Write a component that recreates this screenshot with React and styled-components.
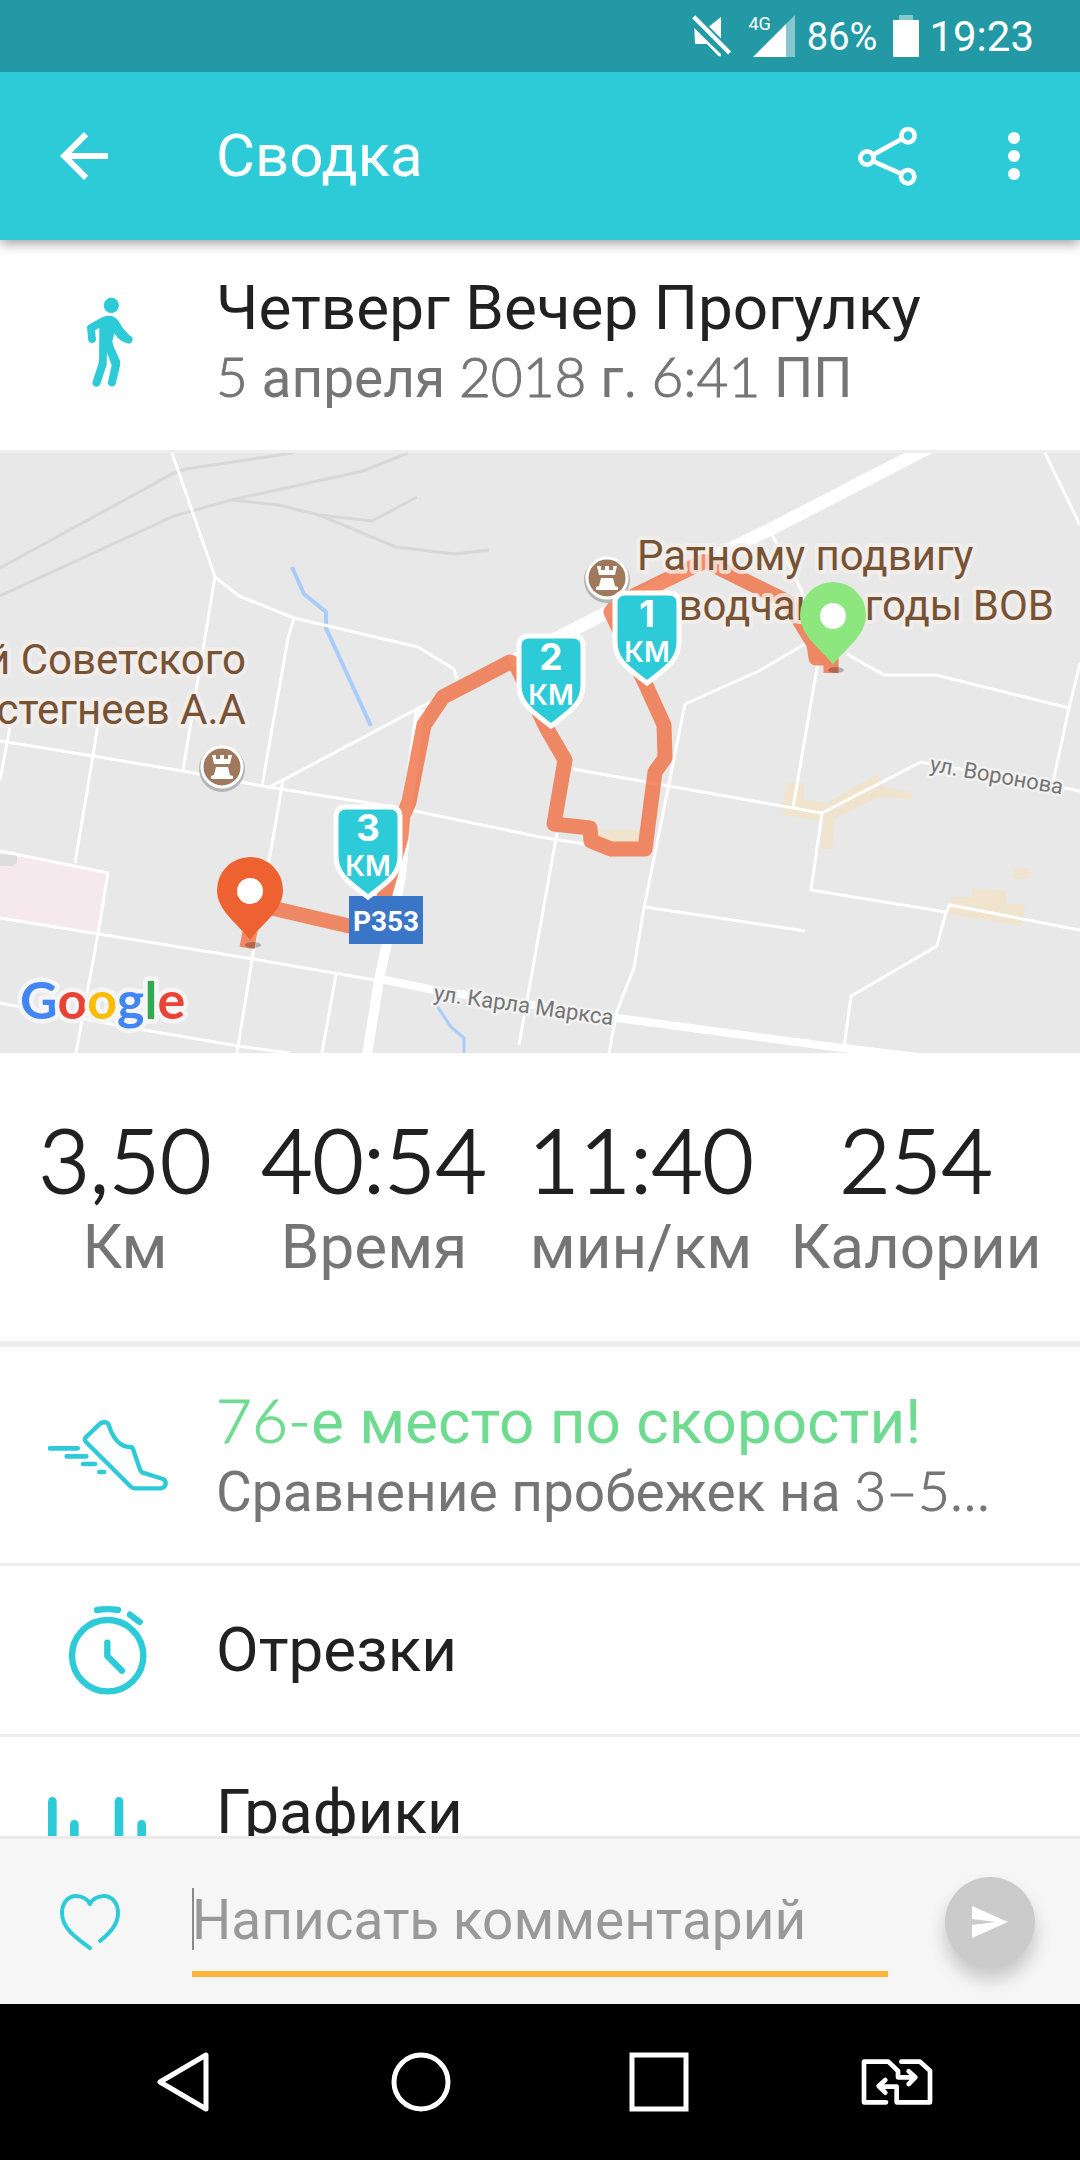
import styled, { createGlobalStyle } from "styled-components";

const teal = "#2dcad7";

const GlobalStyle = createGlobalStyle`
  * {
    box-sizing: border-box;
  }

  body {
    margin: 0;
    background: #ffffff;
    font-family: Roboto, "Noto Sans", sans-serif;
  }

  button {
    background: none;
    border: none;
    padding: 0;
    margin: 0;
    font-family: inherit;
    color: inherit;
    cursor: pointer;
  }

  svg {
    display: block;
    flex: none;
  }
`;

const Page = styled.div`
  display: flex;
  flex-direction: column;
  height: 100vh;
  overflow: hidden;
`;

const StatusBar = styled.div`
  flex: none;
  display: flex;
  align-items: center;
  justify-content: flex-end;
  height: 72px;
  padding-right: 46px;
  background: #2499a6;
  color: #ffffff;
`;

const StatusText = styled.span`
  font-size: ${(props) => (props.$large ? "42px" : "38px")};
  line-height: 48px;
  padding-top: 2px;
  margin-left: ${(props) => (props.$large ? "10px" : "12px")};
`;

const Signal = styled.div`
  display: flex;
  align-items: flex-start;
  margin-left: 16px;
  height: 42px;

  span {
    font-size: 18px;
    line-height: 18px;
    margin-right: -18px;
  }
`;

const Battery = styled.div`
  margin-left: 16px;
`;

const AppBar = styled.header`
  flex: none;
  display: flex;
  align-items: center;
  height: 168px;
  padding: 0 30px 0 48px;
  background: ${teal};
  color: #ffffff;
  box-shadow: 0 3px 12px rgba(0, 0, 0, 0.4);
  clip-path: inset(0 0 -20px 0);
  z-index: 1;
`;

const AppTitle = styled.h1`
  flex: 1;
  margin: 0 0 0 96px;
  font-size: 60px;
  font-weight: 400;
  line-height: 72px;
`;

const BarButton = styled.button`
  margin-left: 60px;
`;

const Scroll = styled.main`
  flex: 1;
  min-height: 0;
  overflow: hidden;
`;

const IconCell = styled.div`
  flex: none;
  display: flex;
  justify-content: center;
  width: 216px;
`;

const Copy = styled.div`
  flex: 1;
  min-width: 0;
  text-align: left;
`;

const Summary = styled.section`
  display: flex;
  align-items: center;
  height: 213px;
  border-bottom: 3px solid #eeeeee;

  ${Copy} {
    padding-bottom: 4px;
  }
`;

const Title = styled.h2`
  margin: 0;
  font-size: 62px;
  font-weight: 400;
  line-height: 70px;
  white-space: nowrap;
  color: ${(props) => (props.$highlight ? "#6edb90" : "#212121")};
`;

const Subtitle = styled.p`
  margin: 0;
  font-size: 55px;
  line-height: 70px;
  white-space: nowrap;
  color: #757575;
`;

const Digits = styled.span`
  font-family: Lato, Roboto, sans-serif;
  font-weight: 300;
  line-height: 1;
  -webkit-text-stroke: 1px currentColor;
`;

const MapWrapper = styled.section`
  height: 600px;
  overflow: hidden;
  background: #e8e8e8;

  svg {
    width: 100%;
    height: 600px;
  }
`;

const Stats = styled.section`
  display: grid;
  grid-template-columns: 250fr 248fr 286fr 264fr;
  padding: 56px 32px 56px 0;
  border-bottom: 6px solid #eeeeee;
`;

const Stat = styled.div`
  text-align: center;
`;

const StatValue = styled.div`
  font-family: Lato, Roboto, sans-serif;
  font-size: 88px;
  font-weight: 300;
  line-height: 100px;
  color: #212121;
  -webkit-text-stroke: 2px currentColor;
`;

const StatLabel = styled.div`
  font-size: 62px;
  line-height: 76px;
  color: #757575;
`;

const Row = styled.button`
  display: flex;
  align-items: center;
  width: 100%;
  height: ${(props) => (props.$tall ? "219px" : "171px")};
  border-bottom: 3px solid #eeeeee;

  ${Copy} {
    padding-top: ${(props) => (props.$tall ? "4px" : "0")};
  }
`;

const CommentBar = styled.form`
  flex: none;
  display: flex;
  align-items: center;
  height: 168px;
  padding: 0 45px 0 54px;
  background: #f6f6f6;
  border-top: 3px solid #ebebeb;
`;

const Field = styled.div`
  flex: 1;
  min-width: 0;
  display: flex;
  align-items: center;
  height: 110px;
  margin: 0 57px 0 66px;
  border-bottom: 6px solid #fdb638;
`;

const Caret = styled.span`
  width: 2px;
  height: 62px;
  margin-right: -2px;
  background: #8a8a8a;
`;

const CommentInput = styled.input`
  flex: 1;
  min-width: 0;
  padding: 2px 0 0;
  border: none;
  outline: none;
  background: none;
  font-family: inherit;
  font-size: 55px;
  line-height: 64px;
  color: #212121;

  &::placeholder {
    color: #999999;
    opacity: 1;
  }
`;

const SendButton = styled.button`
  display: flex;
  align-items: center;
  justify-content: center;
  width: 90px;
  height: 90px;
  border-radius: 50%;
  background: #cbcbcb;
  box-shadow: 0 12px 18px rgba(0, 0, 0, 0.2);
`;

const NavBar = styled.nav`
  flex: none;
  display: grid;
  grid-template-columns: repeat(4, 1fr);
  height: 156px;
  padding: 0 64px;
  background: #000000;

  button {
    display: flex;
    align-items: center;
    justify-content: center;
  }
`;

const stats = [
  { value: "3,50", label: "Км" },
  { value: "40:54", label: "Время" },
  { value: "11:40", label: "мин/км" },
  { value: "254", label: "Калории" },
];

const roads = [
  "M172 0 L215 124 L239 143 L294 165 L418 194 L454 216 L457 226",
  "M215 124 L183 317",
  "M294 165 L288 185 L262 333",
  "M269 334 L283 327 L432 248",
  "M0 288 L93 303 L183 318 L262 333 L400 355 L540 384 L585 391",
  "M10 274 L0 327",
  "M98 270 L93 303 L75 410",
  "M283 327 L253 501 L237 600",
  "M0 398 L108 420 L98 481 L76 600",
  "M0 465 L253 506 L375 527",
  "M336 521 L322 600",
  "M0 550 L138 576 L238 593 L290 600",
  "M557 380 L519 592",
  "M1045 0 L1080 72",
  "M771 80 L795 123 L805 147",
  "M805 191 L759 218 L685 251 L643 460 L634 515 L617 558 L609 600",
  "M847 201 L884 222 L936 222 L1069 255",
  "M1080 210 L1069 255 L1053 329",
  "M818 209 L793 355",
  "M573 316 L793 355 L822 360 L921 309 L1080 338",
  "M822 360 L811 437 L946 459 L950 452 L1080 477",
  "M946 459 L937 493 L851 543 L844 594",
  "M645 454 L805 478",
];

const rails = [
  "M0 115 L174 20 L186 16 L293 0",
  "M0 143 L174 63 L231 47 L363 18 L408 0",
  "M231 47 L279 52 L319 62 L372 68 L417 44",
  "M319 62 L396 94 L455 101 L489 97",
];

const Mixed = ({ children }) =>
  children
    .split(/([\d:–-]+…?)/)
    .map((part, index) =>
      index % 2 ? <Digits key={index}>{part}</Digits> : part
    );

const Rook = ({ x, y }) => (
  <g transform={`translate(${x} ${y})`}>
    <circle cy="2" r="23" fill="#b5b5b5" />
    <circle r="20" fill="#a0785b" stroke="#ffffff" strokeWidth="3" />
    <path
      d="M-10 -12 H-6 V-8 H-2 V-12 H2 V-8 H6 V-12 H10 L8 -3 H-8 Z M-6 0 H6 L8 8 L11 9 V12 H-11 V9 L-8 8 Z"
      fill="#ffffff"
    />
  </g>
);

const Pin = ({ x, y, color }) => (
  <g transform={`translate(${x} ${y})`}>
    <ellipse cx="3" cy="5" rx="8" ry="3" fill="#000000" opacity="0.25" />
    <path
      d="M0 0 C-9 -14 -33 -28 -33 -50 A33 33 0 0 1 33 -50 C33 -28 9 -14 0 0 Z"
      fill={color}
    />
    <circle cy="-49" r="13" fill="#ffffff" />
  </g>
);

const Shield = ({ x, y, number }) => (
  <g transform={`translate(${x} ${y})`}>
    <path
      d="M-22 2 H22 Q32 2 32 12 V51 C32 70 18 78 0 92 C-18 78 -32 70 -32 51 V12 Q-32 2 -22 2 Z"
      fill={teal}
      stroke="#ffffff"
      strokeWidth="5"
    />
    <text
      y="36"
      textAnchor="middle"
      fontFamily="Inter, sans-serif"
      fontSize="37"
      fontWeight="700"
      fill="#ffffff"
    >
      {number}
    </text>
    <text
      y="71"
      textAnchor="middle"
      fontFamily="Inter, sans-serif"
      fontSize="28"
      fontWeight="600"
      fill="#ffffff"
    >
      КМ
    </text>
  </g>
);

const RouteMap = () => (
  <MapWrapper>
    <svg
      viewBox="0 0 1080 600"
      preserveAspectRatio="xMidYMid slice"
      role="img"
      aria-label="Карта маршрута"
    >
      <rect width="1080" height="600" fill="#e8e8e8" />
      <path d="M17 402 L108 420 L98 480 L0 465 V413 H14 Z" fill="#f5e9ed" />
      <path d="M0 402 H17 V410 L12 413 H0 Z" fill="#dcdcdc" />
      <g fill="#f0e4cf">
        <path d="M787 330 H804 V346 L826 350 L876 322 L884 328 L882 334 L913 339 V346 L880 344 L835 366 L832 396 H821 L824 368 L782 362 V350 Z" />
        <path d="M952 444 H972 V435 L1006 438 V451 H1025 L1022 473 L948 461 Z" />
        <path d="M1014 415 H1029 V426 H1012 Z" />
        <path d="M598 377 H640 V389 H598 Z" />
      </g>
      <g fill="none" stroke="#d8d8d8" strokeWidth="3">
        {rails.map((d) => (
          <path key={d} d={d} />
        ))}
      </g>
      <g fill="none" stroke="#a9cdfb" strokeWidth="4">
        <path d="M292 114 L304 141 L326 159 V175 L371 273" />
        <path d="M437 553 L451 574 L464 585 V600" strokeWidth="3" />
      </g>
      <g fill="none" stroke="#ffffff" strokeWidth="3" strokeLinejoin="round">
        {roads.map((d) => (
          <path key={d} d={d} />
        ))}
        <path
          d="M930 -6 L771 76 L705 108 L604 161 L510 209"
          strokeWidth="13"
        />
        <path d="M420 256 L407 355 L401 424 L379 527 L367 602" strokeWidth="10" />
        <path d="M375 525 L434 537 L617 565 L826 593 L919 604" strokeWidth="8" />
      </g>
      <path
        d="M247 495 L255 451 L349 473 L375 478 L388 430 L401 384 L403 363 L409 349 L424 272 L443 244 L510 209 L516 212 L547 276 L565 307 L554 371 L590 375 L591 388 L611 396 H645 L655 319 L665 305 L664 272 L645 230 L611 159 L617 151 L705 108 L788 149 L814 191 L816 205 H831 V220"
        fill="none"
        stroke="#ef6b3e"
        strokeWidth="15"
        strokeLinejoin="round"
        opacity="0.78"
      />

      <rect x="349" y="443" width="74" height="48" fill="#3a76c8" />
      <text
        x="386"
        y="478"
        textAnchor="middle"
        fontFamily="Roboto, sans-serif"
        fontSize="28"
        fontWeight="700"
        fill="#ffffff"
      >
        P353
      </text>

      <g
        fontFamily="Roboto, sans-serif"
        fontSize="42"
        fill="#775334"
        stroke="#f3efec"
        strokeWidth="8"
        strokeOpacity="0.8"
        strokeLinejoin="round"
        paintOrder="stroke"
      >
        <text x="246" y="221" textAnchor="end">
          й Советского
        </text>
        <text x="246" y="271" textAnchor="end">
          стегнеев А.А
        </text>
        <text x="637" y="117">
          Ратному подвигу
        </text>
        <text x="1054" y="167" textAnchor="end">
          водчан в годы ВОВ
        </text>
      </g>
      <g
        fontFamily="Roboto, sans-serif"
        fontSize="22"
        fill="#757575"
        stroke="#f2f2f2"
        strokeWidth="5"
        strokeLinejoin="round"
        paintOrder="stroke"
      >
        <text transform="translate(433 547) rotate(8)">ул. Карла Маркса</text>
        <text transform="translate(929 318) rotate(10)">ул. Воронова</text>
      </g>

      <Rook x={222} y={314} />
      <Rook x={607} y={125} />
      <Pin x={250} y={487} color="#ee6130" />
      <Pin x={833} y={212} color="#8ee67e" />
      <Shield x={368} y={352} number="3" />
      <Shield x={551} y={181} number="2" />
      <Shield x={647} y={138} number="1" />

      <text
        x="20"
        y="566"
        fontFamily="Lato, sans-serif"
        fontSize="52"
        fontWeight="700"
        stroke="#f5f5f5"
        strokeWidth="9"
        strokeLinejoin="round"
        paintOrder="stroke"
      >
        <tspan fill="#4285f4">G</tspan>
        <tspan fill="#ea4335">o</tspan>
        <tspan fill="#fbbc05">o</tspan>
        <tspan fill="#4285f4">g</tspan>
        <tspan fill="#34a853">l</tspan>
        <tspan fill="#ea4335">e</tspan>
      </text>
    </svg>
  </MapWrapper>
);

const WalkIcon = () => (
  <svg width="120" height="130" viewBox="-6 30 360 390" fill={teal}>
    <circle cx="184" cy="106" r="23" />
    <path d="M172 137 C188 136 198 142 205 152 Q216 172 227 184 L240 197 A12 12 0 0 1 231 220 L214 212 Q201 205 193 190 L187 214 Q188 224 194 236 L210 272 Q212 282 209 292 L197 342 A12 12 0 0 1 174 336 L185 286 L171 248 L170 285 L151 342 A12 12 0 0 1 128 334 L147 276 L148 174 L135 181 L138 208 A12 12 0 0 1 115 212 L111 172 Q111 167 116 164 L152 144 Q163 138 172 137 Z" />
  </svg>
);

const ShoeIcon = () => (
  <svg
    width="120"
    height="72"
    viewBox="54 88 360 216"
    fill="none"
    stroke={teal}
    strokeWidth="13"
    strokeLinecap="round"
    strokeLinejoin="round"
  >
    <path d="M211 101 L167 143 Q162 150 168 157 L301 290 Q307 296 314 296 H392 Q407 294 407 281 Q407 272 399 268 L336 248 L331 242 L309 178 Q307 172 300 172 C266 172 248 142 237 108 Q232 92 211 101 Z" />
    <path d="M60 176 H143 M110 200 H169 M159 223 H195 M208 247 H222" strokeWidth="14" />
  </svg>
);

const StopwatchIcon = () => (
  <svg
    width="120"
    height="90"
    viewBox="54 645 360 270"
    fill="none"
    stroke={teal}
    strokeWidth="19"
    strokeLinecap="round"
    strokeLinejoin="round"
  >
    <circle cx="233" cy="797" r="107" />
    <path d="M232 758 V798 L276 842" />
    <path d="M201 660 Q232 655 264 660 M300 674 L329 696" />
  </svg>
);

const ChartIcon = () => (
  <svg
    width="120"
    height="96"
    viewBox="54 1221 360 288"
    stroke={teal}
    strokeWidth="26"
    strokeLinecap="round"
  >
    <path d="M67 1234 V1496 M133 1303 V1496 M267 1234 V1496 M335 1303 V1496" />
  </svg>
);

const App = () => (
  <Page>
    <GlobalStyle />
    <StatusBar>
      <svg width="40" height="42" viewBox="0 0 120 126" fill="#ffffff">
        <path d="M7 39 L52 84 L87 117 V124 H80 L45 87 H9 Z M87 6 V72 L49 36 Z" />
        <path d="M17 4 L122 110" stroke="#2499a6" strokeWidth="6" />
        <path d="M5 5 L113 114" stroke="#ffffff" strokeWidth="13" />
        <path d="M3 17 L100 115" stroke="#2499a6" strokeWidth="5" />
      </svg>
      <Signal>
        <span>4G</span>
        <svg width="42" height="42" viewBox="0 0 42 42" fill="#ffffff">
          <path d="M42 0 V42 H33 V9 Z" opacity="0.45" />
          <path d="M33 9 V42 H0 Z" />
        </svg>
      </Signal>
      <StatusText>86%</StatusText>
      <Battery>
        <svg width="26" height="42" viewBox="0 0 26 42" fill="#ffffff">
          <path d="M6 0 H20 V5 H6 Z" opacity="0.45" />
          <path d="M0 5 H26 V42 H0 Z" />
        </svg>
      </Battery>
      <StatusText $large>19:23</StatusText>
    </StatusBar>

    <AppBar>
      <button type="button" aria-label="Назад">
        <svg width="72" height="72" viewBox="0 0 24 24" fill="#ffffff">
          <path d="M20 11H7.83l5.59-5.59L12 4l-8 8 8 8 1.41-1.41L7.83 13H20v-2z" />
        </svg>
      </button>
      <AppTitle>Сводка</AppTitle>
      <BarButton type="button" aria-label="Поделиться">
        <svg
          width="60"
          height="60"
          viewBox="534 378 180 180"
          fill="none"
          stroke="#ffffff"
          strokeWidth="14"
        >
          <circle cx="561" cy="474" r="20" />
          <circle cx="684" cy="407" r="20" />
          <circle cx="683" cy="530" r="20" />
          <path d="M580 464 L665 417 M580 484 L663 521" />
        </svg>
      </BarButton>
      <BarButton type="button" aria-label="Меню">
        <svg width="72" height="72" viewBox="0 0 24 24" fill="#ffffff">
          <circle cx="12" cy="6" r="2" />
          <circle cx="12" cy="12" r="2" />
          <circle cx="12" cy="18" r="2" />
        </svg>
      </BarButton>
    </AppBar>

    <Scroll>
      <Summary>
        <IconCell>
          <WalkIcon />
        </IconCell>
        <Copy>
          <Title>Четверг Вечер Прогулку</Title>
          <Subtitle>
            <Mixed>5 апреля 2018 г. 6:41 ПП</Mixed>
          </Subtitle>
        </Copy>
      </Summary>

      <RouteMap />

      <Stats>
        {stats.map((stat) => (
          <Stat key={stat.label}>
            <StatValue>{stat.value}</StatValue>
            <StatLabel>{stat.label}</StatLabel>
          </Stat>
        ))}
      </Stats>

      <Row type="button" $tall>
        <IconCell>
          <ShoeIcon />
        </IconCell>
        <Copy>
          <Title as="div" $highlight>
            <Mixed>76-е место по скорости!</Mixed>
          </Title>
          <Subtitle as="div">
            <Mixed>Сравнение пробежек на 3–5…</Mixed>
          </Subtitle>
        </Copy>
      </Row>
      <Row type="button">
        <IconCell>
          <StopwatchIcon />
        </IconCell>
        <Copy>
          <Title as="div">Отрезки</Title>
        </Copy>
      </Row>
      <Row type="button" $tall>
        <IconCell>
          <ChartIcon />
        </IconCell>
        <Copy>
          <Title as="div">Графики</Title>
          <Subtitle as="div">&nbsp;</Subtitle>
        </Copy>
      </Row>
    </Scroll>

    <CommentBar onSubmit={(e) => e.preventDefault()}>
      <button type="button" aria-label="Нравится">
        <svg
          width="72"
          height="72"
          viewBox="0 0 72 72"
          fill="none"
          stroke={teal}
          strokeWidth="4"
          strokeLinecap="round"
          strokeLinejoin="round"
        >
          <path d="M36 62 C22 52 8 42 8 27 C8 16 15 10 22 10 C29 10 34 14 36 18 C38 14 43 10 50 10 C57 10 64 16 64 27 C64 38 57 46 46 55" />
        </svg>
      </button>
      <Field>
        <Caret />
        <CommentInput
          type="text"
          aria-label="Комментарий"
          placeholder="Написать комментарий"
        />
      </Field>
      <SendButton type="submit" aria-label="Отправить">
        <svg width="36" height="32" viewBox="0 0 36 32" fill="#ffffff">
          <path d="M0 0 L36 16 L0 32 V19 L24 16 L0 13 Z" />
        </svg>
      </SendButton>
    </CommentBar>

    <NavBar>
      <button type="button" aria-label="Назад">
        <svg
          width="52"
          height="60"
          viewBox="0 0 52 60"
          fill="none"
          stroke="#ffffff"
          strokeWidth="5"
          strokeLinejoin="round"
        >
          <path d="M49 3 V57 L3 30 Z" />
        </svg>
      </button>
      <button type="button" aria-label="Домой">
        <svg width="60" height="60" viewBox="0 0 60 60" fill="none" stroke="#ffffff" strokeWidth="5">
          <circle cx="30" cy="30" r="27" />
        </svg>
      </button>
      <button type="button" aria-label="Недавние">
        <svg width="60" height="60" viewBox="0 0 60 60" fill="none" stroke="#ffffff" strokeWidth="5">
          <rect x="3" y="3" width="54" height="54" />
        </svg>
      </button>
      <button type="button" aria-label="Сменить SIM">
        <svg
          width="72"
          height="48"
          viewBox="63 54 216 144"
          fill="none"
          stroke="#ffffff"
          strokeWidth="14"
          strokeLinecap="round"
          strokeLinejoin="round"
        >
          <path d="M138 187 H72 V65 H145 L174 93 V112 H222 M206 94 L226 112 L206 132" />
          <path d="M184 65 H240 L270 92 V187 H170 V140 H118 M136 120 L116 138 L136 158" />
        </svg>
      </button>
    </NavBar>
  </Page>
);

export default App;
